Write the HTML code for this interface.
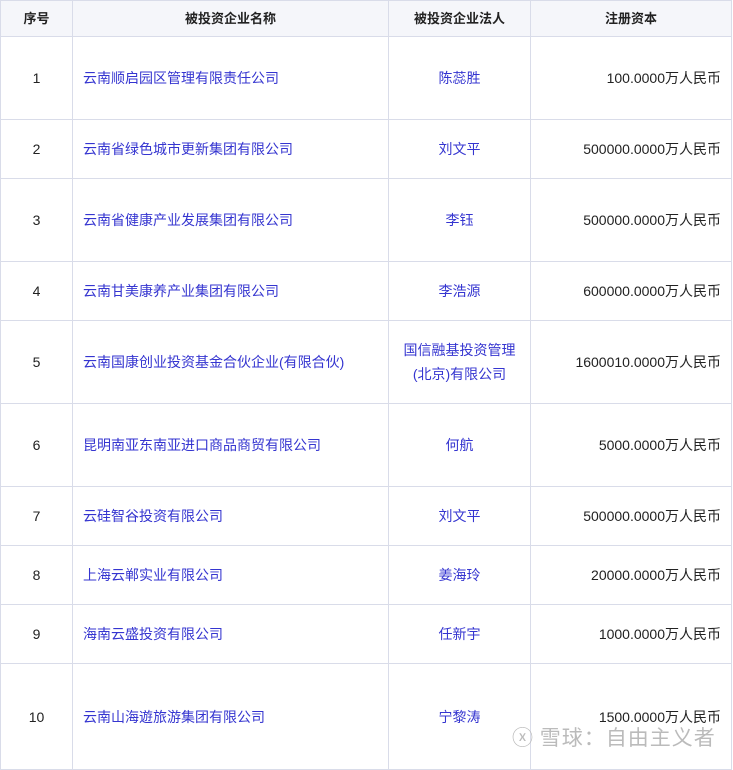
<!DOCTYPE html>
<html><head><meta charset="utf-8"><style>
html,body{margin:0;padding:0;background:#fff;width:733px;height:764px;overflow:hidden}
table{border-collapse:collapse;table-layout:fixed;position:absolute;left:0;top:0;width:731px;font-family:"Liberation Sans","Noto Sans CJK SC",sans-serif;font-size:14px;color:#222}
td,th{border:1px solid #d9dce9;padding:0 10px;line-height:24px}
th{background:#f5f6fa;font-weight:bold;height:35px;text-align:center;color:#222;font-size:13px}
td.c{text-align:center;padding:0 4px}
td.r{text-align:right;padding-right:10px}
a{color:#3535d0;text-decoration:none}
.wm{position:absolute;left:512px;top:722px;font-family:"Noto Sans CJK SC",sans-serif;font-size:21px;color:#bbb;letter-spacing:1px;white-space:nowrap}
</style></head><body>
<table>
<colgroup><col style="width:72px"><col style="width:316px"><col style="width:142px"><col style="width:201px"></colgroup>
<tr><th>序号</th><th>被投资企业名称</th><th>被投资企业法人</th><th>注册资本</th></tr>
<tr style="height:83px"><td class="c">1</td><td><a>云南顺启园区管理有限责任公司</a></td><td class="c"><a>陈蕊胜</a></td><td class="r">100.0000万人民币</td></tr>
<tr style="height:59px"><td class="c">2</td><td><a>云南省绿色城市更新集团有限公司</a></td><td class="c"><a>刘文平</a></td><td class="r">500000.0000万人民币</td></tr>
<tr style="height:83px"><td class="c">3</td><td><a>云南省健康产业发展集团有限公司</a></td><td class="c"><a>李钰</a></td><td class="r">500000.0000万人民币</td></tr>
<tr style="height:59px"><td class="c">4</td><td><a>云南甘美康养产业集团有限公司</a></td><td class="c"><a>李浩源</a></td><td class="r">600000.0000万人民币</td></tr>
<tr style="height:83px"><td class="c">5</td><td><a>云南国康创业投资基金合伙企业(有限合伙)</a></td><td class="c"><a>国信融基投资管理<br>(北京)有限公司</a></td><td class="r">1600010.0000万人民币</td></tr>
<tr style="height:83px"><td class="c">6</td><td><a>昆明南亚东南亚进口商品商贸有限公司</a></td><td class="c"><a>何航</a></td><td class="r">5000.0000万人民币</td></tr>
<tr style="height:59px"><td class="c">7</td><td><a>云硅智谷投资有限公司</a></td><td class="c"><a>刘文平</a></td><td class="r">500000.0000万人民币</td></tr>
<tr style="height:59px"><td class="c">8</td><td><a>上海云郸实业有限公司</a></td><td class="c"><a>姜海玲</a></td><td class="r">20000.0000万人民币</td></tr>
<tr style="height:59px"><td class="c">9</td><td><a>海南云盛投资有限公司</a></td><td class="c"><a>任新宇</a></td><td class="r">1000.0000万人民币</td></tr>
<tr style="height:106px"><td class="c">10</td><td><a>云南山海遊旅游集团有限公司</a></td><td class="c"><a>宁黎涛</a></td><td class="r">1500.0000万人民币</td></tr>
</table>
<div class="wm">ⓧ 雪球：自由主义者</div>
</body></html>
